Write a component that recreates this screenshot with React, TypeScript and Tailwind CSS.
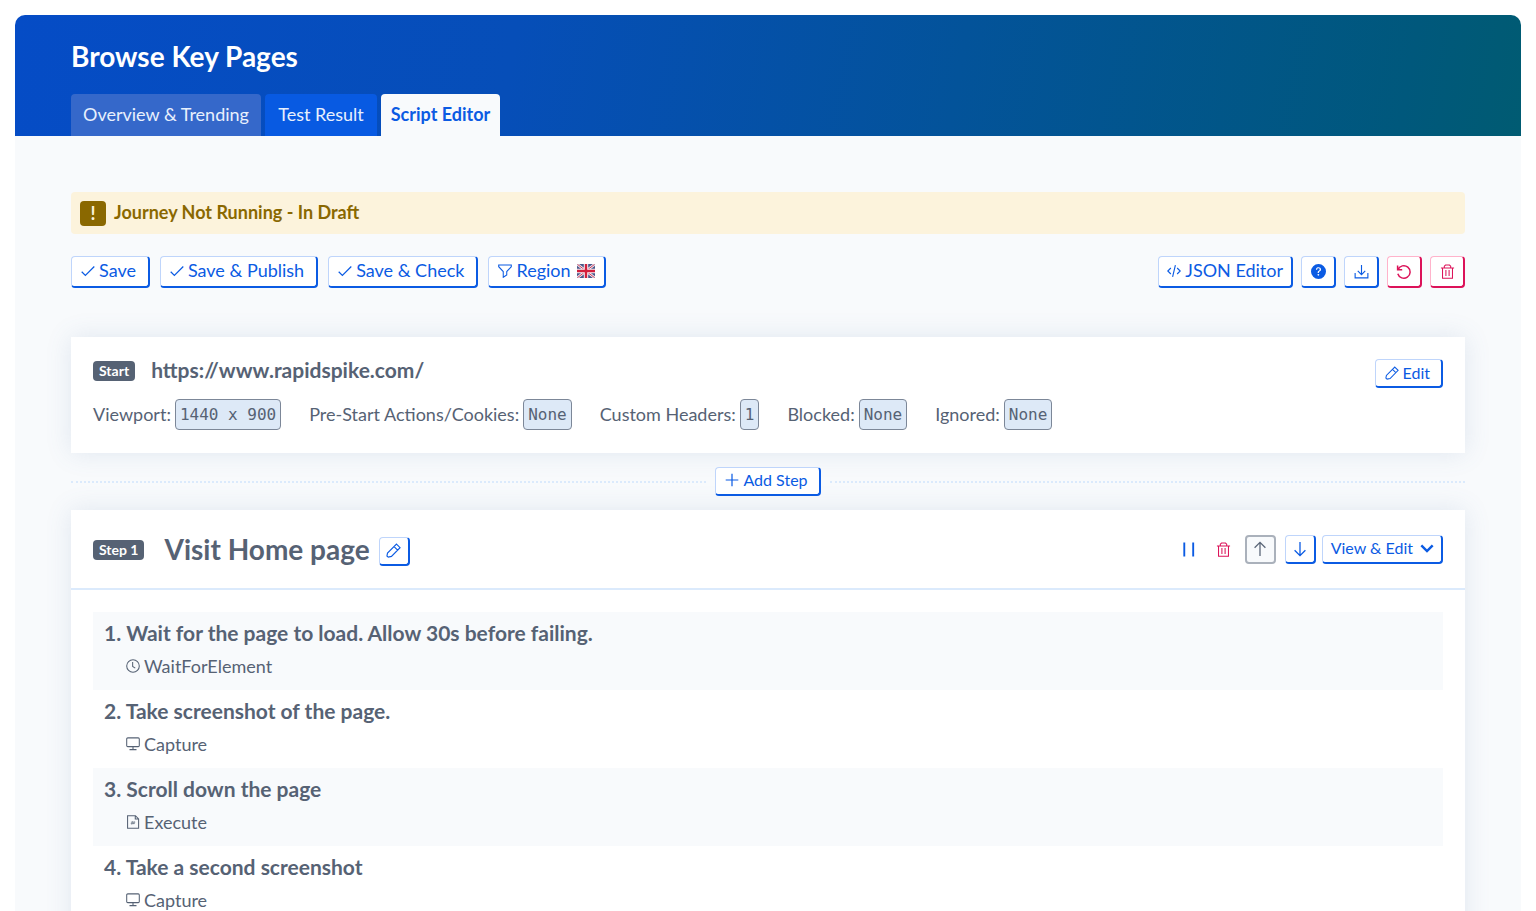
import React from 'react';
import { clsx } from 'clsx';
import { BsQuestionCircleFill } from 'react-icons/bs';

interface IconProps {
  className?: string;
  strokeWidth?: number;
  children: React.ReactNode;
}

const Icon: React.FC<IconProps> = ({ className = 'size-[14px]', strokeWidth = 1, children }) => (
  <svg
    viewBox="0 0 16 16"
    fill="none"
    stroke="currentColor"
    strokeWidth={strokeWidth}
    className={clsx('shrink-0', className)}
    aria-hidden="true"
  >
    {children}
  </svg>
);

const CheckIcon = () => (
  <Icon strokeWidth={1.4}>
    <path d="M.8 8.8 5 13 15.2 2.8" />
  </Icon>
);

const FilterIcon = () => (
  <Icon strokeWidth={1.2}>
    <path d="M.8 1.2h14.4v1.9L10 8.6v4l-4 2.6V8.6L.8 3.1z" />
  </Icon>
);

const CodeIcon = () => (
  <Icon strokeWidth={1.3}>
    <path d="M4.4 4.6.9 8l3.5 3.4M11.6 4.6l3.5 3.4-3.5 3.4M9.6 1.3 6.4 14.6" />
  </Icon>
);

const DownloadIcon = () => (
  <Icon className="size-[15px]" strokeWidth={1.2}>
    <path d="M1.2 9.5v5.3h13.6V9.5M8 1v10M4 7.4l4 4 4-4" />
  </Icon>
);

const UndoIcon = () => (
  <Icon className="size-[16px]" strokeWidth={1.5}>
    <path d="M1.6 1.4v4.4h4.6M2 5.6a6.3 6.3 0 1 1-.2 4.2" />
  </Icon>
);

const TrashIcon = () => (
  <Icon className="size-[15px]" strokeWidth={1.1}>
    <path d="M1 4.2h14M2.7 4.2v11h10.6v-11M4.6 4V2.4l1.3-1.3h4.2l1.3 1.3V4M6.3 6.5v6.3M9.7 6.5v6.3" />
  </Icon>
);

const PencilIcon = ({ className }: { className?: string }) => (
  <Icon className={className} strokeWidth={1.2}>
    <path d="M11.2 1.2 15 5l-9.2 9.3-3.4.7L1 13.8l.6-3zM8.6 3.8l3.8 3.8" />
  </Icon>
);

const PlusIcon = () => (
  <Icon strokeWidth={1.4}>
    <path d="M8 .8v14.4M.8 8h14.4" />
  </Icon>
);

const PauseIcon = () => (
  <Icon className="size-[15px]" strokeWidth={2}>
    <path d="M3.500 .5v15M13 .5v15" />
  </Icon>
);

const ArrowUpIcon = () => (
  <Icon className="size-[16px]" strokeWidth={1.3}>
    <path d="M8 15V1.4M2.6 6.8 8 1.4l5.4 5.4" />
  </Icon>
);

const ArrowDownIcon = () => (
  <Icon className="size-[16px]" strokeWidth={1.3}>
    <path d="M8 1v13.6M2.6 9.2 8 14.6l5.4-5.4" />
  </Icon>
);

const ChevronIcon = () => (
  <Icon strokeWidth={2.8}>
    <path d="M1.5 5 8 11.500 14.500 5" />
  </Icon>
);

const ClockIcon = () => (
  <Icon strokeWidth={1.2}>
    <circle cx="8" cy="8" r="7.2" />
    <path d="M7.6 3.5v5l3 2" />
  </Icon>
);

const ScreenIcon = () => (
  <Icon strokeWidth={1.2}>
    <rect x=".8" y="1" width="14.4" height="10" rx="1.2" />
    <path d="M8 11v3.2M4 14.4h8" />
  </Icon>
);

const FileIcon = () => (
  <Icon strokeWidth={1.2}>
    <path d="M1.8.8h9l3.6 3.6v10.8H1.8zM10.6.8v3.8h3.8" />
    <path d="M6.6 11l.8-4M8.8 10.4l.6-3.2M5.6 8.2h5M5.4 9.8h4.6" strokeWidth=".7" />
  </Icon>
);

const FlagIcon = () => (
  <svg viewBox="0 0 18 14" className="ml-0.5 h-[14px] w-[18px] shrink-0" role="img" aria-label="United Kingdom">
    <clipPath id="flag">
      <rect width="18" height="14" rx="1.5" />
    </clipPath>
    <g clipPath="url(#flag)">
      <rect width="18" height="14" fill="#4a5688" />
      <path d="M0 0l18 14M18 0L0 14" stroke="#e9e6ef" strokeWidth="2.6" />
      <path d="M0 0l18 14M18 0L0 14" stroke="#d6405a" strokeWidth="1" />
      <path d="M9 0v14M0 7h18" stroke="#f3f3f8" strokeWidth="4.4" />
      <path d="M9 0v14M0 7h18" stroke="#d31f3c" strokeWidth="2.4" />
    </g>
  </svg>
);

type Variant = 'primary' | 'danger' | 'muted';

interface ButtonProps extends React.ButtonHTMLAttributes<HTMLButtonElement> {
  variant?: Variant;
  small?: boolean;
}

const variants: Record<Variant, string> = {
  primary: 'border-t border-l border-r-2 border-b-2 bg-white text-[#0b5be3] border-t-[#bfd5fb] border-l-[#bfd5fb] border-r-[#0b5be3] border-b-[#0b5be3]',
  danger: 'border-t border-l border-r-2 border-b-2 bg-white text-[#dc1259] border-t-[#ffb3cb] border-l-[#ffb3cb] border-r-[#dc1259] border-b-[#dc1259]',
  muted: 'border-2 border-[#aab1bb] bg-[#f8fafc] text-[#5b6779]',
};

const Button: React.FC<ButtonProps> = ({ variant = 'primary', small, className, children, ...rest }) => (
  <button
    type="button"
    className={clsx(
      'inline-flex shrink-0 items-center justify-center gap-1 whitespace-nowrap rounded',
      small ? 'h-[29px] text-[16px]' : 'h-8 text-[18px]',
      variants[variant],
      className
    )}
    {...rest}
  >
    {children}
  </button>
);

const tabs = [
  { label: 'Overview & Trending', style: 'w-[190px] bg-[#3568ca] text-[#e8f0fd]' },
  { label: 'Test Result', style: 'w-[112px] bg-[#085ae2] text-[#e8f0fd]' },
  { label: 'Script Editor', style: 'w-[119px] bg-[#f8fafc] font-bold text-[#0b5be3]' },
];

const settings = [
  { label: 'Viewport', value: '1440 x 900' },
  { label: 'Pre-Start Actions/Cookies', value: 'None' },
  { label: 'Custom Headers', value: '1' },
  { label: 'Blocked', value: 'None' },
  { label: 'Ignored', value: 'None' },
];

const actions = [
  { title: 'Wait for the page to load. Allow 30s before failing.', type: 'WaitForElement', icon: <ClockIcon /> },
  { title: 'Take screenshot of the page.', type: 'Capture', icon: <ScreenIcon /> },
  { title: 'Scroll down the page', type: 'Execute', icon: <FileIcon /> },
  { title: 'Take a second screenshot', type: 'Capture', icon: <ScreenIcon /> },
];

const Badge = ({ children }: { children: React.ReactNode }) => (
  <span className="mt-0.5 flex h-5 shrink-0 items-center rounded bg-[#566274] px-[6px] pb-0.5 text-[14px] font-bold text-white">
    {children}
  </span>
);

const Header = () => (
  <header className="rounded-t-[10px] bg-[linear-gradient(100deg,#054cc6_0%,#064eb8_33%,#00587c_92%,#005b72_100%)] px-14 pt-[23px]">
    <h1 className="text-[28px] leading-9 font-bold text-white">Browse Key Pages</h1>
    <nav className="mt-5 flex gap-1">
      {tabs.map((tab) => (
        <a
          key={tab.label}
          href="#"
          className={clsx('rounded-t pb-0.5 text-center text-[18px] leading-10 whitespace-nowrap', tab.style)}
        >
          {tab.label}
        </a>
      ))}
    </nav>
  </header>
);

const Toolbar = () => (
  <div className="mt-[22px] flex flex-wrap justify-between gap-2">
    <div className="flex flex-wrap gap-[10px]">
      <Button className="pr-3 pb-0.5 pl-[9px]"><CheckIcon />Save</Button>
      <Button className="pr-3 pb-0.5 pl-[9px]"><CheckIcon />Save &amp; Publish</Button>
      <Button className="pr-3 pb-0.5 pl-[9px]"><CheckIcon />Save &amp; Check</Button>
      <Button className="px-[9px] pb-0.5"><FilterIcon />Region <FlagIcon /></Button>
    </div>
    <div className="flex flex-wrap gap-2">
      <Button className="px-2 pb-0.5"><CodeIcon />JSON Editor</Button>
      <Button className="w-[35px]" aria-label="Help"><BsQuestionCircleFill className="size-[15px]" /></Button>
      <Button className="w-[35px]" aria-label="Download"><DownloadIcon /></Button>
      <Button className="w-[35px]" variant="danger" aria-label="Reset"><UndoIcon /></Button>
      <Button className="w-[35px]" variant="danger" aria-label="Delete journey"><TrashIcon /></Button>
    </div>
  </div>
);

const StartCard = () => (
  <section className="mt-[49px] flex min-h-[116px] justify-between bg-white px-[22px] shadow-[0_0_24px_rgba(90,120,170,0.15)]">
    <div className="pt-[19px]">
      <div className="flex items-center gap-4">
        <Badge>Start</Badge>
        <h2 className="text-[21px] leading-7 font-bold">https://www.rapidspike.com/</h2>
      </div>
      <dl className="mt-[15px] flex flex-wrap gap-7 text-[18px]">
        {settings.map(({ label, value }) => (
          <div key={label} className="flex items-center gap-1">
            <dt>{label}:</dt>
            <dd className="rounded border border-[#7c8798] bg-[#dde9f7] px-1 font-['DejaVu_Sans_Mono',monospace] text-[16px] leading-[29px]">
              {value}
            </dd>
          </div>
        ))}
      </dl>
    </div>
    <Button small className="mt-[22px] pr-[11px] pl-[9px]"><PencilIcon />Edit</Button>
  </section>
);

const AddStep = () => (
  <div className="flex items-center gap-[9px] py-[14px]">
    <span className="flex-1 border-t-2 border-dotted border-[#dbeafc]" />
    <Button small className="pr-[11px] pb-0.5 pl-[9px]"><PlusIcon />Add Step</Button>
    <span className="flex-1 border-t-2 border-dotted border-[#dbeafc]" />
  </div>
);

const StepCard = () => (
  <section className="bg-white pb-5 shadow-[0_0_24px_rgba(90,120,170,0.15)]">
    <div className="flex h-20 items-center justify-between border-b-2 border-[#dbeafc] px-[22px]">
      <div className="flex items-center">
        <Badge>Step 1</Badge>
        <h2 className="ml-5 text-[28px] leading-9 font-bold">Visit Home page</h2>
        <Button small className="mt-1 ml-[9px] w-[31px]" aria-label="Rename step">
          <PencilIcon className="size-[15px]" />
        </Button>
      </div>
      <div className="flex items-center">
        <button type="button" aria-label="Pause step" className="text-[#0b5be3]"><PauseIcon /></button>
        <button type="button" aria-label="Delete step" className="ml-5 text-[#dc1259]"><TrashIcon /></button>
        <Button small variant="muted" disabled className="ml-[14px] w-[31px]" aria-label="Move step up">
          <ArrowUpIcon />
        </Button>
        <Button small className="ml-[9px] w-[31px]" aria-label="Move step down"><ArrowDownIcon /></Button>
        <Button small className="ml-[6px] gap-[7px] pr-[7px] pb-0.5 pl-2" aria-haspopup="menu">View &amp; Edit<ChevronIcon /></Button>
      </div>
    </div>
    <ol className="px-[22px] pt-[22px]">
      {actions.map(({ title, type, icon }, index) => (
        <li key={title} className="h-[78px] px-[11px] pt-[7px] odd:bg-[#f8fafc]">
          <h3 className="text-[21px] leading-7 font-bold">
            {index + 1}. {title}
          </h3>
          <p className="mt-[5px] ml-[22px] flex items-center gap-1 text-[18px] leading-7">
            {icon}
            {type}
          </p>
        </li>
      ))}
    </ol>
  </section>
);

export default function App() {
  return (
    <div className="min-h-screen bg-white px-[15px] pt-[15px] font-['Lato',sans-serif] text-[#566274]">
      <Header />
      <main className="bg-[#f8fafc] px-14 pt-14 pb-10">
        <div role="alert" className="flex h-[42px] items-center gap-2 rounded bg-[#fcf3dc] px-[9px] text-[18px] font-bold text-[#8a6800]">
          <span className="flex h-[25px] w-[26px] items-center justify-center rounded bg-[#8a6800] text-[#fcf3dc]">!</span>
          <p className="pb-0.5">Journey Not Running - In Draft</p>
        </div>
        <Toolbar />
        <StartCard />
        <AddStep />
        <StepCard />
      </main>
    </div>
  );
}
